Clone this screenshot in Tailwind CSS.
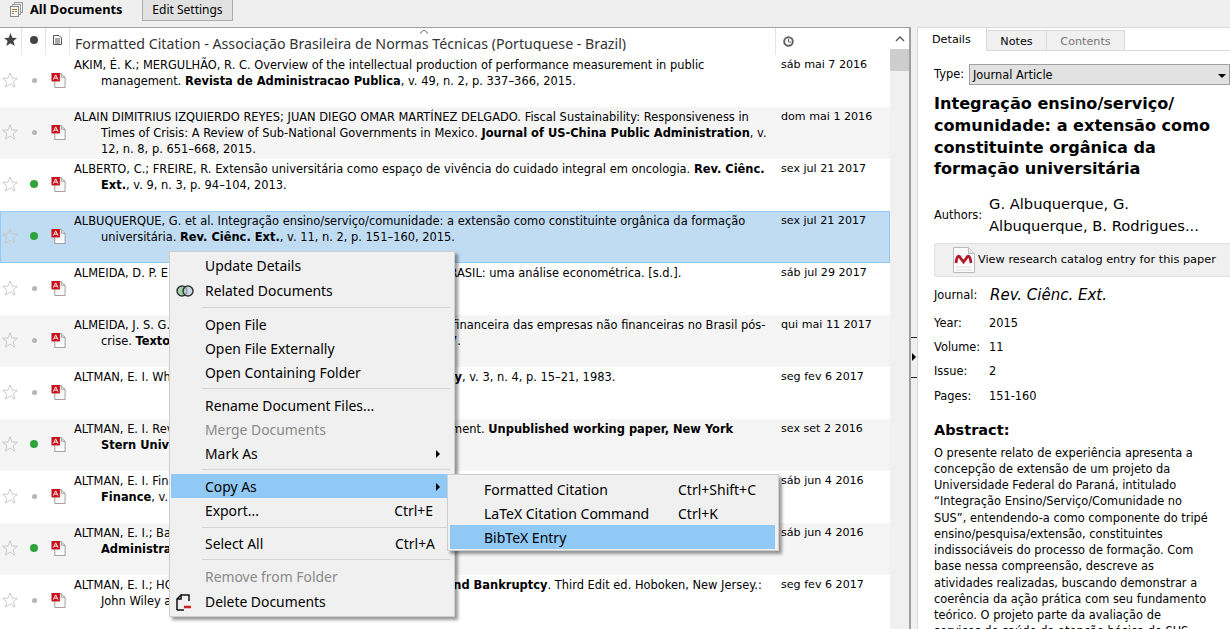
<!DOCTYPE html>
<html lang="en">
<head>
  <meta charset="UTF-8">
  <title>All Documents</title>
  <script src="https://cdn.jsdelivr.net/npm/@tailwindcss/browser@4"></script>
</head>
<body class="bg-[#f0f0f0] font-['Noto_Sans',sans-serif] text-black overflow-hidden">
  <svg class="hidden">
    <symbol id="star" viewBox="0 0 18 18"><polygon points="9,1 11.2,6.8 17.4,7.1 12.5,10.9 14.2,17 9,13.6 3.8,17 5.5,10.9 0.6,7.1 6.8,6.8" fill="none" stroke="#c4c4c4"/></symbol>
    <symbol id="pdf" viewBox="0 0 15 16"><path d="M3.500 .5h7l4 4v11h-11z" fill="#fafafa" stroke="#9a9a9a"/><path d="M10.500 .5v4h4" fill="#e4e4e4" stroke="#9a9a9a"/><rect x="0" y="0" width="9" height="9" fill="#c8101a"/><path d="M2 7l2.500-5 2.500 5M3 5.500h3" fill="none" stroke="#fff"/></symbol>
  </svg>

  <div class="relative h-[629px] w-[1230px] overflow-hidden">
    <!-- top bar -->
    <div class="flex h-[27px] items-start bg-[#efefef]">
      <svg class="mt-[2px] ml-[10px] h-[15px] w-[13px]" viewBox="0 0 13 15"><rect x="4.500" y=".5" width="8" height="10" fill="#f4f4f4" stroke="#999"/><rect x="2.500" y="2.500" width="8" height="10" fill="#f4f4f4" stroke="#999"/><rect x=".5" y="4.500" width="8" height="10" fill="#f4f4f4" stroke="#888"/><path d="M2 7.500h5M2 9.500h2M5 9.500h2M2 11.500h2" stroke="#b07a40"/></svg>
      <span class="ml-[7px] w-[112px] pt-px text-[12.800px] leading-[17px] font-bold">All Documents</span>
      <div class="-mt-px flex h-[22px] w-[91px] items-center justify-center border border-[#adadad] bg-[#e1e1e1] text-[12px]">Edit Settings</div>
    </div>

    <div class="flex h-[602px]">
      <!-- document list -->
      <div class="flex w-[911px] border-t border-r-2 border-[#a0a0a0] bg-white">
        <div class="w-[890px]">
          <div class="relative flex h-[27px] text-[#444]">
            <div class="flex w-[22px] items-center justify-center border-r border-[#e5e5e5] pb-[4px]">
              <svg class="h-[13px] w-[13px]" viewBox="0 0 18 18"><polygon points="9,0 11.500,6.500 18,7 13,11.200 14.800,18 9,14.200 3.200,18 5,11.200 0,7 6.500,6.500" fill="#444"/></svg>
            </div>
            <div class="flex w-[24px] items-center justify-center border-r border-[#e5e5e5] pb-[4px]">
              <div class="h-[8px] w-[8px] rounded-full bg-[#444]"></div>
            </div>
            <div class="flex w-[24px] items-center justify-center border-r border-[#e5e5e5] pb-[4px]">
              <svg class="h-[10px] w-[9px]" viewBox="0 0 9 10"><path d="M.5.500h5.500l2.500 2.500v6.500h-8zM2 4h5M2 6h5M2 8h5" fill="none" stroke="#555"/></svg>
            </div>
            <div class="h-[23px] w-[705px] overflow-hidden pt-[6px] pl-[5px] text-[14.200px] leading-[20px] whitespace-nowrap text-[#333]">Formatted Citation - Associação Brasileira de Normas Técnicas (Portuguese - Brazil)</div>
            <div class="flex w-[115px] border-l border-[#e5e5e5] pt-[8px] pl-[7px]">
              <svg class="h-[11px] w-[11px]" viewBox="0 0 11 11"><circle cx="5.500" cy="5.500" r="4.300" fill="none" stroke="#666" stroke-width="2"/><path d="M5.500 3v3h2.500" fill="none" stroke="#666"/></svg>
            </div>
            <svg class="absolute top-[1px] left-[419px] h-[5px] w-[10px]" viewBox="0 0 10 5"><path d="M1 4.500l4-3.500 4 3.500" fill="none" stroke="#666"/></svg>
          </div>
          <div id="rows"></div>
        </div>
        <!-- scrollbar -->
        <div class="w-[19px] bg-[#f0f0f0]">
          <div class="flex h-[21px] items-center justify-center bg-white">
            <svg class="h-[6px] w-[10px]" viewBox="0 0 10 6"><path d="M1 5l4-4 4 4" fill="none" stroke="#606060" stroke-width="1.500"/></svg>
          </div>
          <div class="h-[22px] bg-[#cdcdcd]"></div>
        </div>
      </div>

      <!-- splitter -->
      <div class="relative w-[6px]">
        <div class="absolute top-[310px] left-0 h-px w-[6px] bg-[#222]"></div>
        <div class="absolute top-[326px] left-[1px] h-0 w-0 border-y-[4px] border-l-[4px] border-y-transparent border-l-black"></div>
        <div class="absolute top-[350px] left-0 h-px w-[6px] bg-[#222]"></div>
      </div>

      <!-- details pane -->
      <div class="w-[313px] border-t border-l border-[#d9d9d9] bg-white font-['DejaVu_Sans',sans-serif]">
        <div class="flex h-[23px] items-end border-b border-[#d9d9d9] text-[11.200px]">
          <div class="-mb-px h-[23px] w-[69px] border-r border-[#d9d9d9] bg-white pt-[4px] pl-[14px]">Details</div>
          <div class="h-[20px] w-[60px] border-t border-r border-[#d9d9d9] bg-[#f0f0f0] pt-[3px] text-center">Notes</div>
          <div class="h-[20px] w-[78px] border-t border-r border-[#d9d9d9] bg-[#f0f0f0] pt-[3px] text-center text-[#777]">Contents</div>
        </div>
        <div class="pl-[16px]">
          <div class="mt-[13px] flex items-center text-[11.400px]">
            <span class="w-[35px] pt-px">Type:</span>
            <div class="flex h-[21px] flex-1 items-center justify-between border border-[#a0a0a0] bg-[#e1e1e1] pt-[2px] pr-[3px] pl-[3px]">Journal Article<span class="h-0 w-0 border-x-[4px] border-t-[4px] border-x-transparent border-t-black"></span></div>
          </div>
          <h1 class="mt-[8px] text-[16.100px] leading-[21.800px] font-bold">Integração ensino/serviço/<br>comunidade: a extensão como<br>constituinte orgânica da<br>formação universitária</h1>
          <div class="mt-[13px] flex items-center">
            <span class="w-[55px] pt-px text-[11.400px]">Authors:</span>
            <span class="text-[14.700px] leading-[22px]">G. Albuquerque, G.<br>Albuquerque, B. Rodrigues...</span>
          </div>
          <div class="mt-[6px] flex h-[34px] items-center rounded-l-[3px] border border-r-0 border-[#e0e0e0] bg-[#f0f0f0] pl-[18px] text-[11.300px]">
            <svg class="mr-[3px] h-[26px] w-[22px]" viewBox="0 0 22 26"><path d="M.5.500h15l6 6v19h-21z" fill="#fafafa" stroke="#bbb"/><path d="M15.500.500v6h6" fill="#e6e6e6" stroke="#bbb"/><path d="M3 16c1-8 3-8 4.500-5l3 4 3-4c1.500-3 3.500-3 4.500 5" fill="none" stroke="#b31b2b" stroke-width="2.800"/><path d="M3 20h15M3 23h15" stroke="#ddd"/></svg>
            View research catalog entry for this paper
          </div>
          <div class="mt-[7px] flex items-center">
            <span class="w-[56px] text-[11.400px]">Journal:</span>
            <span class="text-[15px] italic">Rev. Ciênc. Ext.</span>
          </div>
          <div class="mt-[4px] grid grid-cols-[55px_1fr] text-[11.400px] leading-[24.300px]">
            <span>Year:</span><span>2015</span>
            <span>Volume:</span><span>11</span>
            <span>Issue:</span><span>2</span>
            <span>Pages:</span><span>151-160</span>
          </div>
          <h2 class="mt-[11px] text-[14.500px] leading-[22px] font-bold">Abstract:</h2>
          <p class="mt-[4px] text-[11.400px] leading-[16.200px] whitespace-nowrap">O presente relato de experiência apresenta a<br>concepção de extensão de um projeto da<br>Universidade Federal do Paraná, intitulado<br>“Integração Ensino/Serviço/Comunidade no<br>SUS”, entendendo-a como componente do tripé<br>ensino/pesquisa/extensão, constituintes<br>indissociáveis do processo de formação. Com<br>base nessa compreensão, descreve as<br>atividades realizadas, buscando demonstrar a<br>coerência da ação prática com seu fundamento<br>teórico. O projeto parte da avaliação de<br>serviços de saúde da atenção básica do SUS</p>
        </div>
      </div>
    </div>

    <!-- context menu -->
    <div class="absolute top-[251px] left-[169px] h-[366px] w-[286px] border border-[#cfcfcf] bg-[#f0f0f0] px-[1px] pt-[2px] text-[13.900px] shadow-[3px_3px_3px_rgba(0,0,0,0.4)]">
      <div class="flex h-[24px] items-center pl-[34px]">Update Details</div>
      <div class="relative mt-px flex h-[24px] items-center pl-[34px]">
        <svg class="absolute left-[4px] h-[12px] w-[20px]" viewBox="0 0 20 12"><circle cx="7" cy="6" r="5" fill="#9fd0a5" stroke="#333" stroke-width="1.500"/><circle cx="13" cy="6" r="5" fill="#b9cfe0" fill-opacity=".7" stroke="#333" stroke-width="1.500"/></svg>
        Related Documents
      </div>
      <div class="flex h-[10px] items-start px-[31px] pt-[4px] pr-[3px]"><div class="h-px w-full bg-[#d4d4d4]"></div></div>
      <div class="flex h-[24px] items-center pl-[34px]">Open File</div>
      <div class="flex h-[24px] items-center pl-[34px]">Open File Externally</div>
      <div class="flex h-[24px] items-center pl-[34px]">Open Containing Folder</div>
      <div class="flex h-[9px] items-start px-[31px] pt-[3px] pr-[3px]"><div class="h-px w-full bg-[#d4d4d4]"></div></div>
      <div class="flex h-[24px] items-center pl-[34px]">Rename Document Files...</div>
      <div class="flex h-[24px] items-center pl-[34px] text-[#8a8a8a]">Merge Documents</div>
      <div class="flex h-[24px] items-center justify-between pr-[13px] pl-[34px]">Mark As<span class="h-0 w-0 border-y-[4px] border-l-[4px] border-y-transparent border-l-black"></span></div>
      <div class="flex h-[8px] items-start px-[31px] pt-[3px] pr-[3px]"><div class="h-px w-full bg-[#d4d4d4]"></div></div>
      <div class="mr-[6px] flex h-[24px] items-center justify-between bg-[#90c8f6] pt-[2px] pr-[7px] pl-[34px]">Copy As<span class="h-0 w-0 border-y-[4px] border-l-[4px] border-y-transparent border-l-black"></span></div>
      <div class="flex h-[25px] items-center justify-between pt-[2px] pr-[20px] pl-[34px]">Export...<span>Ctrl+E</span></div>
      <div class="flex h-[9px] items-start px-[31px] pt-[4px] pr-[3px]"><div class="h-px w-full bg-[#d4d4d4]"></div></div>
      <div class="flex h-[24px] items-center justify-between pr-[18px] pl-[34px]">Select All<span>Ctrl+A</span></div>
      <div class="flex h-[9px] items-start px-[31px] pt-[3px] pr-[3px]"><div class="h-px w-full bg-[#d4d4d4]"></div></div>
      <div class="flex h-[24px] items-center pl-[34px] text-[#8a8a8a]">Remove from Folder</div>
      <div class="relative mt-px flex h-[25px] items-center pl-[34px]">
        <svg class="absolute left-[5px] h-[17px] w-[16px]" viewBox="0 0 16 17"><path d="M5 1h8v6M1 16V5l4-4v4H1M1 16h7" fill="none" stroke="#111" stroke-width="1.500"/><path d="M8 13h7" stroke="#d02020" stroke-width="2.500"/></svg>
        Delete Documents
      </div>
    </div>

    <!-- copy as submenu -->
    <div class="absolute top-[474px] left-[447px] h-[77px] w-[332px] border border-[#cfcfcf] bg-[#f0f0f0] pr-[3px] pl-[2px] pt-[3px] text-[14px] shadow-[3px_3px_3px_rgba(0,0,0,0.4)]">
      <div class="-mt-px flex h-[24px] items-center pl-[34px]"><span class="w-[194px]">Formatted Citation</span>Ctrl+Shift+C</div>
      <div class="flex h-[24px] items-center pl-[34px]"><span class="w-[194px]">LaTeX Citation Command</span>Ctrl+K</div>
      <div class="flex h-[24px] items-center bg-[#90c8f6] pl-[34px]">BibTeX Entry</div>
    </div>
  </div>

  <script>
    const docs = [
      { read: false, date: 'sáb mai 7 2016', lines: ['AKIM, É. K.; MERGULHÃO, R. C. Overview of the intellectual production of performance measurement in public', 'management. <b>Revista de Administracao Publica</b>, v. 49, n. 2, p. 337–366, 2015.'] },
      { read: false, date: 'dom mai 1 2016', lines: ['ALAIN DIMITRIUS IZQUIERDO REYES; JUAN DIEGO OMAR MARTÍNEZ DELGADO. Fiscal Sustainability: Responsiveness in', 'Times of Crisis: A Review of Sub-National Governments in Mexico. <b>Journal of US-China Public Administration</b>, v.', '12, n. 8, p. 651–668, 2015.'] },
      { read: true, date: 'sex jul 21 2017', lines: ['ALBERTO, C.; FREIRE, R. Extensão universitária como espaço de vivência do cuidado integral em oncologia. <b>Rev. Ciênc.</b>', '<b>Ext.</b>, v. 9, n. 3, p. 94–104, 2013.'] },
      { read: true, selected: true, date: 'sex jul 21 2017', lines: ['ALBUQUERQUE, G. et al. Integração ensino/serviço/comunidade: a extensão como constituinte orgânica da formação', 'universitária. <b>Rev. Ciênc. Ext.</b>, v. 11, n. 2, p. 151–160, 2015.'] },
      { read: false, date: 'sáb jul 29 2017', lines: ['ALMEIDA, D. P. E. Determinantes da taxa de juros de câmbio no BRASIL: uma análise econométrica. [s.d.].'] },
      { read: false, date: 'qui mai 11 2017', lines: ['ALMEIDA, J. S. G. DE et al. Estrutura de capital e recente situação financeira das empresas não financeiras no Brasil pós-', 'crise. <b>Texto para Discussão IE/UNICAMP</b>, n. 282, abr. 2017.'] },
      { read: false, date: 'seg fev 6 2017', lines: ['ALTMAN, E. I. Why businesses fail?&nbsp;&nbsp;<b>Journal of Business Strategy</b>, v. 3, n. 4, p. 15–21, 1983.'] },
      { read: true, date: 'sex set 2 2016', lines: ['ALTMAN, E. I. Revisiting credit scoring models in a Basel II environment. <b>Unpublished working paper, New York</b>', '<b>Stern University</b>, 2006.'] },
      { read: false, date: 'sáb jun 4 2016', lines: ['ALTMAN, E. I. Financial ratios', '<b>Finance</b>, v. 23'] },
      { read: true, date: 'sáb jun 4 2016', lines: ['ALTMAN, E. I.; Baydia', '<b>Administration</b>'] },
      { read: false, date: 'seg fev 6 2017', lines: ['ALTMAN, E. I.; HOTCHKISS, E. S. <b>Corporate Financial Distress and Bankruptcy</b>. Third Edit ed. Hoboken, New Jersey.:', 'John Wiley and Sons, 2005.'] },
    ];

    document.getElementById('rows').innerHTML = docs.map((doc, i) => `
      <div class="flex h-[52px] ${doc.selected ? 'bg-[#c0dcf3] outline outline-[#90c8f6] -outline-offset-1' : i % 2 ? 'bg-[#f5f5f5]' : 'bg-white'}">
        <div class="flex w-[22px] justify-center pt-[17px] pr-[2px]"><svg class="h-[16px] w-[16px]"><use href="#star"/></svg></div>
        <div class="flex w-[24px] justify-center pt-[20px]">
          <div class="${doc.read ? 'mt-[1px] h-[8px] w-[8px] bg-[#2ea43c]' : 'mt-[3px] h-[5px] w-[5px] bg-[#b5b5b5]'} rounded-full"></div>
        </div>
        <div class="flex w-[24px] justify-center pt-[18px] pl-[1px]"><svg class="h-[15px] w-[15px]"><use href="#pdf"/></svg></div>
        <div class="w-[705px] overflow-hidden pt-[2px] pl-[4px] font-['DejaVu_Sans',sans-serif] text-[11.450px] leading-[16px] whitespace-nowrap">
          ${doc.lines.map((line, n) => `<div class="${n ? 'pl-[27px]' : ''}">${line}</div>`).join('')}
        </div>
        <div class="w-[115px] pt-[2px] pl-[6px] font-['DejaVu_Sans',sans-serif] text-[11.100px] leading-[16px]">${doc.date}</div>
      </div>
    `).join('');
  </script>
</body>
</html>
